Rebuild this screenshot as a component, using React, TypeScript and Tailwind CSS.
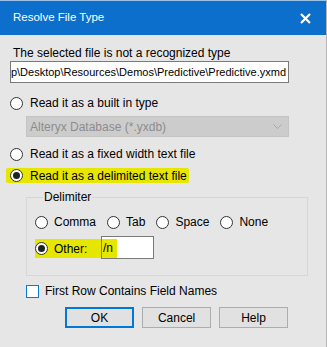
import React from 'react';

function Radio({ checked }: { checked?: boolean }) {
  return (
    <span className="w-[13px] h-[13px] rounded-full border border-[#333333] bg-white flex items-center justify-center shrink-0">
      {checked && <span className="w-[7px] h-[7px] rounded-full bg-[#222222]" />}
    </span>
  );
}

function RadioRow({ label, checked, gap = 'gap-[7px]' }: { label: string; checked?: boolean; gap?: string }) {
  return (
    <div className={`flex items-center h-[16px] ${gap}`}>
      <Radio checked={checked} />
      <span className="leading-[16px]">{label}</span>
    </div>
  );
}

export default function App() {
  return (
    <div
      className="w-[327px] h-[347px] bg-[#e6e6e6] text-[12px] text-black border-r border-[#b5b5b5] overflow-hidden"
      style={{ fontFamily: '"Liberation Sans", Arial, sans-serif' }}
    >
      {/* title bar */}
      <div className="h-[35px] bg-[#0b6fcb] border-t border-[#9cc0e6] flex items-center justify-between pl-[13px] pr-[15px] text-white text-[11.5px]">
        <span>Resolve File Type</span>
        <svg width="11" height="11" viewBox="0 0 11 11" className="mt-[1px]">
          <path d="M1 1 L10 10 M10 1 L1 10" stroke="white" strokeWidth="2.2" />
        </svg>
      </div>

      <div className="pl-[10px] pr-[38px]">
        <div className="mt-[10px] pl-[3px] leading-[16px]">The selected file is not a recognized type</div>

        <div className="h-[22px] w-[279px] bg-white border border-[#7a7a7a] flex items-center justify-end overflow-hidden pr-[2px] whitespace-nowrap text-[11px]">
          <span className="shrink-0">p\Desktop\Resources\Demos\Predictive\Predictive.yxmd</span>
        </div>

        <div className="mt-[12px]">
          <RadioRow label="Read it as a built in type" />
        </div>

        <div className="mt-[5px] ml-[16px] w-[263px] h-[21px] bg-[#cccccc] border border-[#c4c4c4] flex items-center justify-between pl-[3px] pr-[6px] text-[#8c8c8c]">
          <span>Alteryx Database (*.yxdb)</span>
          <svg width="9" height="6" viewBox="0 0 9 6">
            <path d="M0.5 0.5 L4.5 4.5 L8.5 0.5" stroke="#a8a8a8" fill="none" strokeWidth="1" />
          </svg>
        </div>

        <div className="mt-[9px]">
          <RadioRow label="Read it as a fixed width text file" />
        </div>

        <div className="mt-[6px] -ml-[4px] inline-flex items-center h-[15px] bg-[#e6e600] pl-[4px] pr-[2px] rounded-[2px]">
          <RadioRow label="Read it as a delimited text file" checked />
        </div>

        <fieldset className="mt-[5px] ml-[16px] w-[282px] border border-[#d6d6d6] pl-[8px] pb-[16px]">
          <legend className="ml-[8px] px-[1px] leading-[16px]">Delimiter</legend>
          <div className="mt-[9px] flex items-center gap-[11px]">
            <RadioRow label="Comma" gap="gap-[6px]" />
            <RadioRow label="Tab" gap="gap-[6px]" />
            <RadioRow label="Space" gap="gap-[6px]" />
            <RadioRow label="None" gap="gap-[6px]" />
          </div>
          <div className="mt-[6px] flex items-center">
            <div className="flex items-center h-[19px] bg-[#e6e600] w-[66px] gap-[6px] mt-[2px]">
              <Radio checked />
              <span className="leading-[16px]">Other:</span>
            </div>
            <div className="w-[53px] h-[23px] bg-white border border-[#7a7a7a] flex items-center">
              <span className="h-[19px] mt-[2px] bg-[#e6e600] pl-[1px] pr-[4px] leading-[19px]">/n</span>
            </div>
          </div>
        </fieldset>

        <div className="mt-[7px] ml-[16px] flex items-center gap-[6px]">
          <span className="w-[13px] h-[13px] border border-[#0a7ad6] bg-white" />
          <span className="leading-[16px]">First Row Contains Field Names</span>
        </div>

        <div className="mt-[8px] ml-[55px] flex gap-[8px]">
          <button className="w-[73px] h-[21px] bg-[#e1e1e1] border-2 border-[#0078d7] leading-none">OK</button>
          <button className="w-[73px] h-[21px] bg-[#e1e1e1] border border-[#adadad] leading-none">Cancel</button>
          <button className="w-[73px] h-[21px] bg-[#e1e1e1] border border-[#adadad] leading-none">Help</button>
        </div>
      </div>
    </div>
  );
}
